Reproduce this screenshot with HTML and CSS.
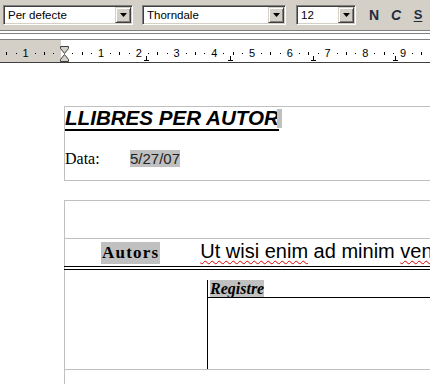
FILE: index.html
```html
<!DOCTYPE html>
<html lang="ca">
<head>
    <meta charset="UTF-8">
    <title>Llibres per autor</title>
    <link rel="stylesheet" href="styles.css">
</head>
<body>

    <div class="toolbar">
        <div class="combo combo-style">
            <span class="combo-text">Per defecte</span>
            <span class="combo-btn"><svg width="7" height="4" viewBox="0 0 7 4"><path d="M0 0H7L3.5 4Z" fill="#000"/></svg></span>
        </div>
        <div class="combo combo-font">
            <span class="combo-text">Thorndale</span>
            <span class="combo-btn"><svg width="7" height="4" viewBox="0 0 7 4"><path d="M0 0H7L3.5 4Z" fill="#000"/></svg></span>
        </div>
        <div class="combo combo-size">
            <span class="combo-text">12</span>
            <span class="combo-btn"><svg width="7" height="4" viewBox="0 0 7 4"><path d="M0 0H7L3.5 4Z" fill="#000"/></svg></span>
        </div>
        <div class="fmt-buttons">
            <span class="fmt fmt-bold">N</span>
            <span class="fmt fmt-italic">C</span>
            <span class="fmt fmt-underline">S</span>
        </div>
    </div>
    <div class="groove"></div>
    <div class="groove groove-second"></div>

    <div class="ruler">
        <div class="ruler-scale">
            <span class="t"></span><span class="d"></span><span class="n">1</span><span class="d"></span>
            <span class="t"></span><span class="d"></span><span></span><span class="d"></span>
            <span class="t"></span><span class="d"></span><span class="n">1</span><span class="d"></span>
            <span class="t"></span><span class="d"></span><span class="n">2</span><span class="d"></span>
            <span class="t"></span><span class="d"></span><span class="n">3</span><span class="d"></span>
            <span class="t"></span><span class="d"></span><span class="n">4</span><span class="d"></span>
            <span class="t"></span><span class="d"></span><span class="n">5</span><span class="d"></span>
            <span class="t"></span><span class="d"></span><span class="n">6</span><span class="d"></span>
            <span class="t"></span><span class="d"></span><span class="n">7</span><span class="d"></span>
            <span class="t"></span><span class="d"></span><span class="n">8</span><span class="d"></span>
            <span class="t"></span><span class="d"></span><span class="n">9</span><span class="d"></span>
            <span class="t"></span><span class="d"></span>
        </div>
        <svg class="indent" width="9" height="16" viewBox="0 0 9 16">
            <path d="M0.5 0.5H8.5V2.5L4.5 7.5L0.5 2.5Z" fill="#d4d0c8" stroke="#404040"/>
            <path d="M4.5 8.5L8.5 13.5V15.5H0.5V13.5Z" fill="#d4d0c8" stroke="#404040"/>
        </svg>
        <span class="tab-stop" style="left: 144px"></span>
        <span class="tab-stop" style="left: 228px"></span>
        <span class="tab-stop" style="left: 311px"></span>
        <span class="tab-stop" style="left: 393px"></span>
    </div>

    <div class="page">
        <div class="frame frame-head">
            <div class="title"><span class="title-text">LLIBRES PER AUTOR</span><span class="field-mark"></span></div>
            <div class="date-row">
                <span class="date-label">Data:</span>
                <span class="field date-value">5/27/07</span>
            </div>
        </div>

        <div class="frame frame-group">
            <div class="group-head"></div>
            <div class="group-row">
                <span class="field field-autors">Autors</span>
                <span class="lorem"><span class="misspelt">Ut wisi enim</span> ad minim <span class="misspelt">veniam</span>, quis nostrud</span>
            </div>
            <div class="double-rule"></div>
            <div class="group-body">
                <div class="sub-frame">
                    <div class="sub-head"><span class="field field-registre">Registre</span></div>
                </div>
            </div>
            <div class="group-foot"></div>
        </div>
    </div>

</body>
</html>
```

FILE: styles.css
```css
body {
    margin: 0;
    width: 430px;
    height: 384px;
    overflow: hidden;
    font-family: "Liberation Sans", Arial, sans-serif;
    background: #fff;
}

/* toolbar */
.toolbar {
    display: flex;
    align-items: flex-start;
    height: 30px;
    box-sizing: border-box;
    padding: 5px 0 0 3px;
    background: #d4d0c8;
}
.combo {
    display: flex;
    height: 20px;
    box-sizing: border-box;
    padding: 1px;
    background: #fff;
    border: 1px solid;
    border-color: #808080 #fff #fff #808080;
    box-shadow: inset 1px 1px 0 #404040, inset -1px -1px 0 #d4d0c8;
}
.combo-style { width: 130px; }
.combo-font { width: 144px; margin-left: 9px; }
.combo-size { width: 60px; margin-left: 10px; }
.combo-text {
    flex: 1;
    padding-left: 3px;
    font-size: 11.5px;
    line-height: 16px;
    color: #000;
}
.combo-btn {
    display: flex;
    align-items: center;
    justify-content: center;
    width: 16px;
    height: 16px;
    box-sizing: border-box;
    background: #d4d0c8;
    border: 1px solid;
    border-color: #d4d0c8 #404040 #404040 #d4d0c8;
    box-shadow: inset 1px 1px 0 #fff, inset -1px -1px 0 #808080;
}
.fmt-buttons {
    display: flex;
    margin-left: 7px;
    color: #1f2c40;
}
.fmt {
    width: 22px;
    text-align: center;
    font-size: 14px;
    line-height: 20px;
    font-weight: bold;
}
.fmt-italic { font-style: italic; }
.fmt-underline {
    font-size: 13px;
    text-decoration: underline;
    text-underline-offset: 2px;
}

.groove {
    height: 0;
    border-top: 1px solid #808080;
    border-bottom: 1px solid #fff;
}
.groove-second { margin-top: 1px; }

/* ruler */
.ruler {
    position: relative;
    height: 22px;
    margin-top: 4px;
    border-top: 1px solid #808080;
    border-bottom: 1px solid #404040;
    background: linear-gradient(to right, #d4d0c8 0 61px, #fff 61px);
}
.ruler-scale {
    display: grid;
    grid-template-columns: repeat(46, 9.45px);
    align-items: center;
    justify-items: center;
    height: 15px;
    padding: 6px 0 0 2px;
}
.ruler-scale .n {
    font-size: 11px;
    line-height: 11px;
    color: #000;
}
.ruler-scale .d {
    width: 1px;
    height: 1px;
    background: #000;
}
.ruler-scale .t {
    width: 1px;
    height: 3px;
    background: #000;
}
.indent {
    position: absolute;
    left: 60px;
    top: 6px;
}
.tab-stop {
    position: absolute;
    bottom: 1px;
    width: 5px;
    height: 4px;
    border-bottom: 1px solid #000;
    background: linear-gradient(#000, #000) center / 1px 100% no-repeat;
}

/* document */
.page {
    height: 321px;
    box-sizing: border-box;
    padding: 43px 0 0 64px;
    overflow: hidden;
    background: #fff;
}
.frame {
    width: 400px;
    border-left: 1px solid #c0c0c0;
    border-top: 1px solid #c0c0c0;
}
.frame-head {
    padding-bottom: 13px;
    border-bottom: 1px solid #c0c0c0;
}
.title {
    white-space: nowrap;
    font-size: 20.6px;
    line-height: 22px;
    font-style: italic;
    font-weight: bold;
    color: #000;
}
.title-text {
    text-decoration: underline;
    text-decoration-thickness: 2px;
    text-underline-offset: 4px;
}
.field-mark {
    display: inline-block;
    width: 5px;
    height: 19px;
    margin-left: -2px;
    vertical-align: -3px;
    background: #c0c0c0;
}
.field { background: #c0c0c0; }
.date-row {
    display: flex;
    align-items: baseline;
    margin-top: 21px;
    line-height: 17px;
}
.date-label {
    width: 65px;
    font-family: "Liberation Serif", "Times New Roman", serif;
    font-size: 16px;
}
.date-value {
    font-size: 15px;
    color: #222;
}

.frame-group { margin-top: 19px; }
.group-head {
    height: 37px;
    border-bottom: 1px solid #c0c0c0;
}
.group-row {
    display: flex;
    align-items: baseline;
    height: 27px;
    white-space: nowrap;
}
.field-autors {
    height: 22px;
    margin-left: 36px;
    padding: 0 1px;
    font-family: "Liberation Serif", "Times New Roman", serif;
    font-size: 17px;
    line-height: 22px;
    font-weight: bold;
    letter-spacing: 1.2px;
}
.lorem {
    margin-left: 40px;
    font-size: 20px;
    line-height: 24px;
}
.misspelt {
    text-decoration: underline wavy #e00000;
    text-decoration-thickness: 1px;
    text-underline-offset: 2px;
}
.double-rule {
    height: 2px;
    margin-left: -1px;
    border-top: 1px solid #000;
    border-bottom: 1px solid #000;
}
.group-body {
    height: 89px;
    padding-top: 10px;
    border-bottom: 1px solid #c0c0c0;
}
.sub-frame {
    height: 89px;
    margin-left: 142px;
    border-left: 1px solid #000;
}
.sub-head {
    height: 17px;
    padding-left: 2px;
    line-height: 17px;
    border-bottom: 1px solid #000;
}
.field-registre {
    font-family: "Liberation Serif", "Times New Roman", serif;
    font-size: 16px;
    font-style: italic;
    font-weight: bold;
}
.group-foot { height: 30px; }
```
